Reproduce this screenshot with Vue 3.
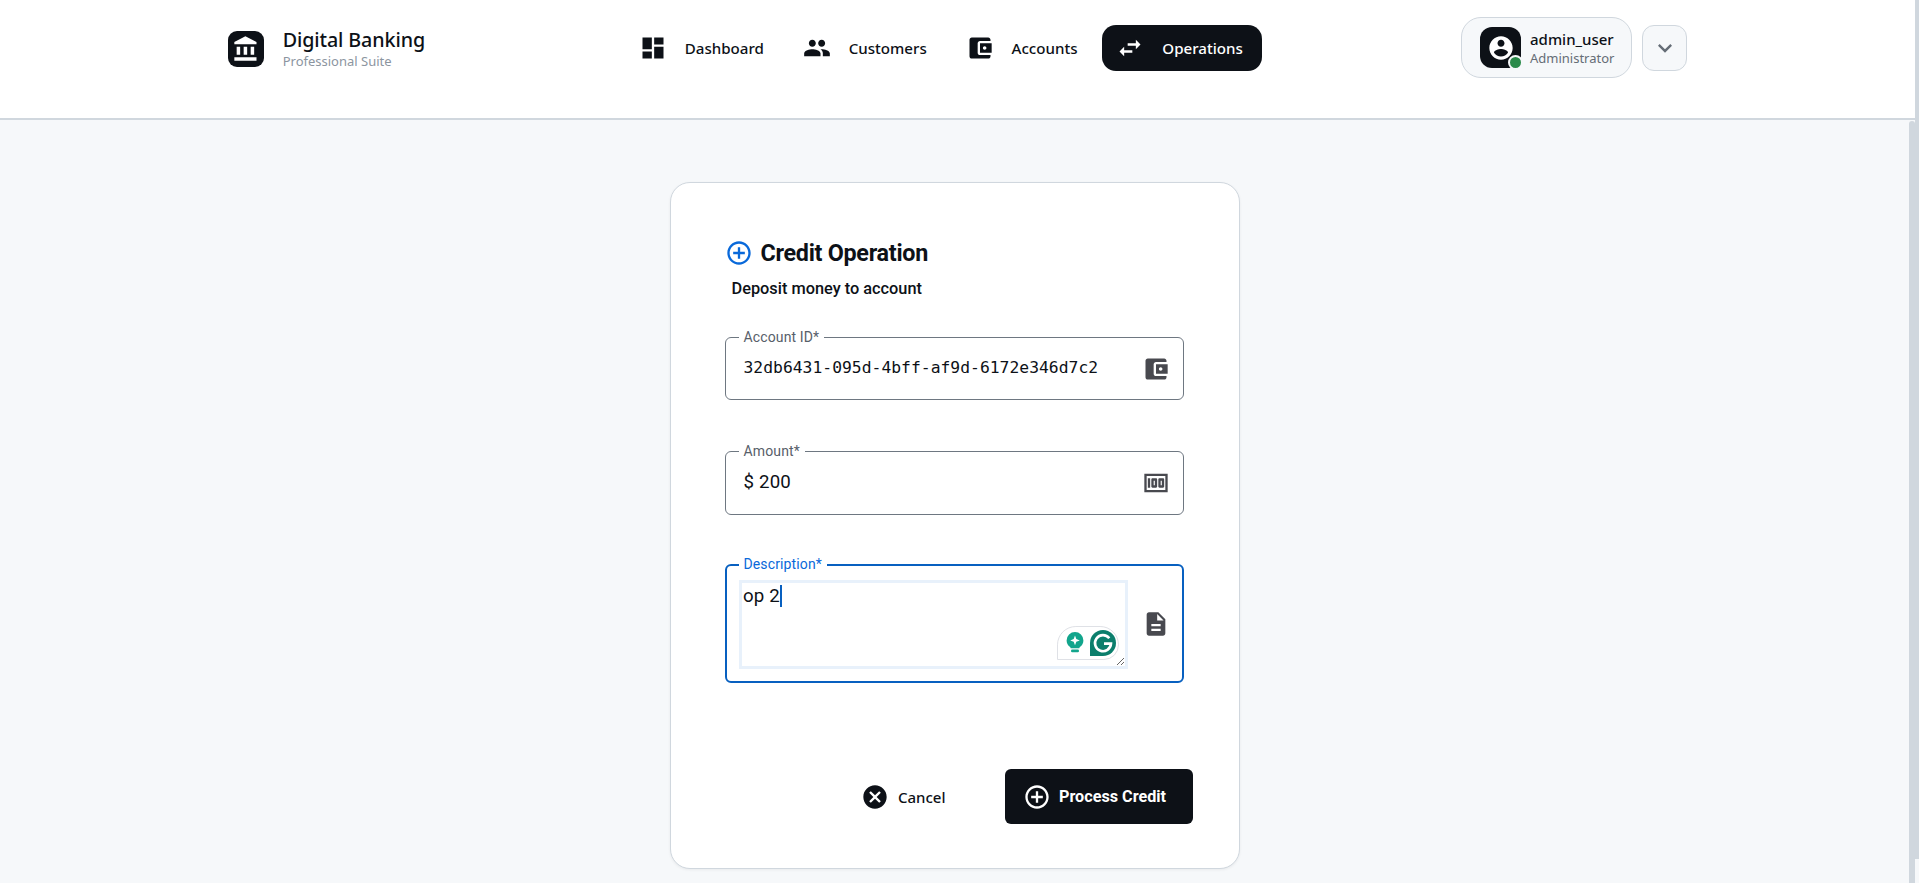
<script setup>
const nav = [
  { label: 'Dashboard', d: 'M3 13h8V3H3v10zm0 8h8v-6H3v6zm10 0h8V11h-8v10zm0-18v6h8V3h-8z' },
  { label: 'Customers', d: 'M16 11c1.66 0 2.99-1.34 2.99-3S17.66 5 16 5c-1.66 0-3 1.34-3 3s1.34 3 3 3zm-8 0c1.66 0 2.99-1.34 2.99-3S9.66 5 8 5C6.34 5 5 6.34 5 8s1.34 3 3 3zm0 2c-2.33 0-7 1.17-7 3.5V19h14v-2.5c0-2.33-4.67-3.5-7-3.5zm8 0c-.29 0-.62.02-.97.05 1.16.84 1.97 1.97 1.97 3.45V19h6v-2.5c0-2.33-4.67-3.5-7-3.5z' },
  { label: 'Accounts', d: 'M21 18v1c0 1.1-.9 2-2 2H5c-1.11 0-2-.9-2-2V5c0-1.1.89-2 2-2h14c1.1 0 2 .9 2 2v1h-9c-1.11 0-2 .9-2 2v8c0 1.1.89 2 2 2h9zm-9-2h10V8H12v8zm4-2.5c-.83 0-1.5-.67-1.5-1.5s.67-1.5 1.5-1.5 1.5.67 1.5 1.5-.67 1.5-1.5 1.5z' },
  { label: 'Operations', active: true, d: 'M6.99 11L3 15l3.99 4v-3H14v-2H6.99v-3zM21 9l-3.99-4v3H10v2h7.01v3L21 9z' }
]
const wallet = nav[2].d
const addCircle = 'M13 7h-2v4H7v2h4v4h2v-4h4v-2h-4V7zm-1-5C6.48 2 2 6.48 2 12s4.48 10 10 10 10-4.48 10-10S17.52 2 12 2zm0 18c-4.41 0-8-3.59-8-8s3.59-8 8-8 8 3.59 8 8-3.59 8-8 8z'
</script>

<template>
  <div class="page">
    <div class="content">
      <header class="header">
        <div class="brand">
          <div class="logo">
            <svg class="icon" viewBox="0 0 24 24"><path d="M4 10v7h3v-7H4zm6 0v7h3v-7h-3zM2 22h19v-3H2v3zm14-12v7h3v-7h-3zm-4.5-9L2 6v2h19V6l-9.5-5z" /></svg>
          </div>
          <div class="brand-text">
            <div class="brand-title">Digital Banking</div>
            <div class="brand-sub">Professional Suite</div>
          </div>
        </div>

        <nav class="nav">
          <a v-for="item in nav" :key="item.label" class="nav-item" :class="{ active: item.active }">
            <svg class="icon" viewBox="0 0 24 24"><path :d="item.d" /></svg>
            <span>{{ item.label }}</span>
          </a>
        </nav>

        <div class="user-area">
          <div class="user">
            <div class="avatar">
              <svg class="icon" viewBox="0 0 24 24"><path d="M12 2C6.48 2 2 6.48 2 12s4.48 10 10 10 10-4.48 10-10S17.52 2 12 2zm0 3c1.66 0 3 1.34 3 3s-1.34 3-3 3-3-1.34-3-3 1.34-3 3-3zm0 14.2c-2.5 0-4.71-1.28-6-3.22.03-1.99 4-3.08 6-3.08 1.99 0 5.97 1.09 6 3.08-1.29 1.94-3.5 3.22-6 3.22z" /></svg>
              <span class="status"></span>
            </div>
            <div class="user-text">
              <div class="user-name">admin_user</div>
              <div class="user-role">Administrator</div>
            </div>
          </div>
          <button class="chevron">
            <svg class="icon" viewBox="0 0 24 24"><path d="M16.59 8.59L12 13.17 7.41 8.59 6 10l6 6 6-6z" /></svg>
          </button>
        </div>
      </header>

      <div class="body">
        <main class="main">
          <section class="card">
            <div class="card-title">
              <svg class="icon title-icon" viewBox="0 0 24 24"><path :d="addCircle" /></svg>
              <h2>Credit Operation</h2>
            </div>
            <p class="subtitle">Deposit money to account</p>

            <div class="field first">
              <label>Account ID*</label>
              <input class="mono" value="32db6431-095d-4bff-af9d-6172e346d7c2" readonly />
              <svg class="icon adorn" viewBox="0 0 24 24"><path :d="wallet" /></svg>
            </div>

            <div class="field second">
              <label>Amount*</label>
              <input value="$ 200" readonly />
              <svg class="icon adorn" viewBox="0 0 24 24"><path fill-rule="evenodd" d="M5 8h2v8H5zm7 0H9c-.55 0-1 .45-1 1v6c0 .55.45 1 1 1h3c.55 0 1-.45 1-1V9c0-.55-.45-1-1-1zm-1 6h-1v-4h1v4zm7-6h-3c-.55 0-1 .45-1 1v6c0 .55.45 1 1 1h3c.55 0 1-.45 1-1V9c0-.55-.45-1-1-1zm-1 6h-1v-4h1v4zM2 4v16h20V4H2zm2 14V6h16v12H4z" /></svg>
            </div>

            <div class="field focus">
              <label>Description*</label>
              <div class="area-wrap">
                <textarea readonly spellcheck="false">op 2</textarea>
                <span class="caret"></span>
                <div class="grammarly">
                  <svg class="bulb" viewBox="0 0 18 21">
                    <path fill="#12a58c" d="M9 0a8.4 8.4 0 0 0-8.4 8.4c0 2.9 1.500 5 3.200 6.400.6.500.9 1 .9 1.500h8.600c0-.5.3-1 .9-1.500 1.700-1.400 3.200-3.500 3.200-6.400A8.4 8.4 0 0 0 9 0z" />
                    <path fill="#fff" d="M9 3.6l1.300 3.500 3.500 1.300-3.500 1.300L9 13.200l-1.300-3.500-3.500-1.300 3.500-1.300z" />
                    <rect x="5" y="17.6" width="8" height="2.6" rx="1.3" fill="#12a58c" />
                  </svg>
                  <svg class="gmark" viewBox="0 0 26 26">
                    <path fill="#0b7e6c" d="M13 0a13 13 0 1 1 0 26H0V13A13 13 0 0 1 13 0z" />
                    <path fill="none" stroke="#fff" stroke-width="2.6" d="M19.3 8.2A8 8 0 1 0 21 13.6h-7" />
                  </svg>
                </div>
              </div>
              <svg class="icon adorn" viewBox="0 0 24 24"><path d="M14 2H6c-1.1 0-2 .9-2 2v16c0 1.1.9 2 2 2h12c1.1 0 2-.9 2-2V8l-6-6zm2 16H8v-2h8v2zm0-4H8v-2h8v2zm-3-5V3.5L18.5 9H13z" /></svg>
            </div>

            <div class="actions">
              <button class="cancel">
                <svg class="icon" viewBox="0 0 24 24"><path d="M12 2C6.47 2 2 6.47 2 12s4.47 10 10 10 10-4.47 10-10S17.53 2 12 2zm5 13.59L15.59 17 12 13.41 8.41 17 7 15.59 10.59 12 7 8.41 8.41 7 12 10.59 15.59 7 17 8.41 13.41 12 17 15.59z" /></svg>
                <span>Cancel</span>
              </button>
              <button class="submit">
                <svg class="icon" viewBox="0 0 24 24"><path :d="addCircle" /></svg>
                <span>Process Credit</span>
              </button>
            </div>
          </section>
        </main>
        <div class="inner-scroll"></div>
      </div>
    </div>
    <div class="outer-scroll"><div class="outer-thumb"></div></div>
  </div>
</template>

<style>
html, body { margin: 0; overflow: hidden; }
</style>

<style scoped>
.page {
  display: flex;
  width: 1919px;
  height: 883px;
  overflow: hidden;
  background: #f6f8fa;
  color: #0d1117;
  font-family: "Noto Sans", "Open Sans", sans-serif;
}
.content {
  flex: 1;
  min-width: 0;
  display: flex;
  flex-direction: column;
}
.outer-scroll {
  width: 4px;
  background: #f6f8fa;
}
.outer-thumb {
  height: 859px;
  background: #d0d7de;
}
.icon {
  width: 28px;
  height: 28px;
  flex: none;
  fill: currentColor;
  display: block;
}

/* header */
.header {
  height: 118px;
  flex: none;
  box-sizing: content-box;
  border-bottom: 2px solid #d0d7de;
  background: #fff;
  display: flex;
  align-items: flex-start;
  justify-content: space-between;
  padding: 0 228px;
}
.brand {
  width: 197px;
  display: flex;
  align-items: center;
  gap: 19px;
  margin-top: 27px;
}
.logo {
  width: 36px;
  height: 36px;
  border-radius: 9px;
  background: #0d1117;
  color: #fff;
  display: flex;
  align-items: center;
  justify-content: center;
}
.brand-text { display: flex; flex-direction: column; }
.brand-title {
  font-size: 19.7px;
  font-weight: 500;
  line-height: 26px;
  letter-spacing: -0.1px;
  white-space: nowrap;
}
.brand-sub {
  font-size: 13px;
  line-height: 17px;
  color: #8c959f;
  white-space: nowrap;
}
.nav {
  display: flex;
  gap: 5.3px;
  margin-top: 25px;
}
.nav-item {
  height: 46px;
  display: flex;
  align-items: center;
  gap: 18px;
  padding: 0 19px 0 14.5px;
  border-radius: 14px;
  font-size: 15.1px;
  font-weight: 500;
  white-space: nowrap;
}
.nav-item.active {
  background: #0d1117;
  color: #fff;
}
.user-area {
  display: flex;
  align-items: center;
  gap: 10px;
  margin-top: 17px;
}
.user {
  width: 171px;
  height: 61px;
  box-sizing: border-box;
  border: 1px solid #d0d7de;
  border-radius: 20px;
  background: #f6f8fa;
  display: flex;
  align-items: center;
  gap: 9px;
  padding-left: 18px;
}
.avatar {
  position: relative;
  width: 41px;
  height: 41px;
  border-radius: 12px;
  background: #0d1117;
  color: #fff;
  display: flex;
  align-items: center;
  justify-content: center;
}
.status {
  position: absolute;
  right: -2px;
  bottom: -2px;
  width: 11px;
  height: 11px;
  border-radius: 50%;
  background: #2a8a4a;
  border: 2px solid #f6f8fa;
}
.user-name {
  font-size: 15px;
  font-weight: 500;
  line-height: 20px;
  white-space: nowrap;
}
.user-role {
  font-size: 13px;
  line-height: 18px;
  color: #656d76;
  white-space: nowrap;
}
.chevron {
  width: 45px;
  height: 46px;
  padding: 0;
  box-sizing: border-box;
  border: 1px solid #d0d7de;
  border-radius: 12px;
  background: #f6f8fa;
  color: #656d76;
  display: flex;
  align-items: center;
  justify-content: center;
}

/* body */
.body {
  flex: 1;
  min-height: 0;
  display: flex;
}
.main {
  flex: 1;
  min-width: 0;
  display: flex;
  justify-content: center;
  padding-top: 62px;
}
.inner-scroll {
  width: 6px;
  margin-top: 1px;
  background: #d0d7de;
  border-radius: 3px 3px 0 0;
}
.card {
  width: 570px;
  height: 687px;
  box-sizing: border-box;
  flex: none;
  background: #fff;
  border: 1px solid #d0d7de;
  border-radius: 20px;
  box-shadow: 0 1px 3px rgba(13, 17, 23, 0.06);
  padding: 56px 46px 0 54px;
  font-family: Roboto, sans-serif;
}
.card-title {
  display: flex;
  align-items: center;
  gap: 8px;
  height: 28px;
}
.title-icon { color: #0969da; }
.card-title h2 {
  margin: 0;
  font-size: 23.33px;
  font-weight: 700;
  line-height: 28px;
  letter-spacing: -0.28px;
  color: #0d1117;
}
.subtitle {
  margin: 11px 0 0 7px;
  font-size: 16.33px;
  font-weight: 500;
  line-height: 21px;
}

/* fields */
.field {
  position: relative;
  width: 459px;
  box-sizing: border-box;
  border: 1px solid #6e7781;
  border-radius: 6px;
  display: flex;
  align-items: center;
  padding-right: 12.5px;
}
.field.first { margin-top: 38px; height: 63px; }
.field.second { margin-top: 51px; height: 64px; }
.field.focus {
  margin-top: 49px;
  height: 119px;
  border: 2px solid #0860c0;
  padding-right: 11.5px;
}
.field label {
  position: absolute;
  top: -9px;
  left: 13px;
  padding: 0 5px;
  background: #fff;
  font-size: 14px;
  line-height: 16px;
  letter-spacing: 0.13px;
  color: #57606a;
}
.field.focus label { left: 12px; top: -10px; color: #0969da; }
.field input {
  flex: 1;
  min-width: 0;
  border: 0;
  outline: 0;
  padding: 0 0 3px 18px;
  background: transparent;
  font: 400 18.67px Roboto, sans-serif;
  letter-spacing: 0.18px;
  color: #0d1117;
}
.field input.mono {
  font-family: "DejaVu Sans Mono", monospace;
  font-size: 16.33px;
  letter-spacing: 0.02px;
}
.adorn { color: #48494f; margin-left: auto; }
.area-wrap {
  position: relative;
  flex: none;
  width: 383px;
  height: 83px;
  margin: 1px 0 0 15.5px;
  outline: 3px solid #e8f1fb;
}
textarea {
  display: block;
  box-sizing: border-box;
  width: 383px;
  height: 83px;
  margin: 0;
  padding: 0 0 0 1px;
  border: 0;
  outline: 0;
  resize: vertical;
  background: #fff;
  font: 400 18.67px/26px Roboto, sans-serif;
  letter-spacing: 0.18px;
  color: #0d1117;
}
.caret {
  position: absolute;
  left: 38.4px;
  top: 2px;
  width: 2px;
  height: 22px;
  background: #0860c0;
}
.grammarly {
  position: absolute;
  left: 315px;
  top: 43px;
  width: 62px;
  height: 34px;
  box-sizing: border-box;
  border: 1px solid #dfe1e6;
  border-radius: 20px 20px 16px 0;
  background: #fff;
  display: flex;
  align-items: center;
}
.bulb {
  width: 18px;
  height: 21px;
  margin-left: 8px;
}
.gmark {
  width: 26px;
  height: 26px;
  margin-left: 6px;
}

/* actions */
.actions {
  display: flex;
  justify-content: flex-end;
  align-items: center;
  margin-top: 86px;
  gap: 59px;
}
.actions button {
  padding: 0;
  border: 0;
  display: flex;
  align-items: center;
  gap: 8.5px;
  background: none;
  color: inherit;
}
.cancel {
  font-family: "Noto Sans", sans-serif;
  font-size: 15px;
  font-weight: 500;
}
.actions .submit {
  width: 188px;
  height: 55px;
  box-sizing: border-box;
  padding-left: 18px;
  border-radius: 6px;
  background: #0d1117;
  color: #fff;
  font-family: Roboto, sans-serif;
  font-size: 16.2px;
  font-weight: 700;
}
</style>
